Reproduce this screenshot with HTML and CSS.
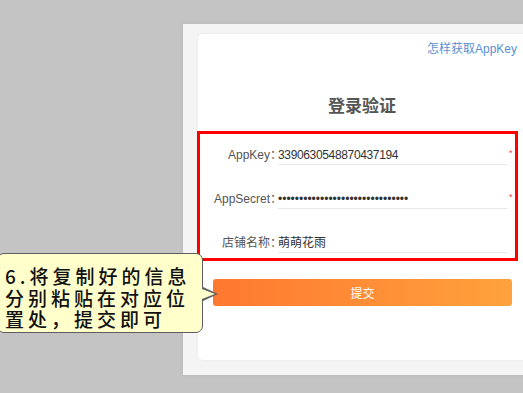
FILE: index.html
```html
<!DOCTYPE html>
<html lang="zh-CN">
<head>
    <meta charset="UTF-8" />
    <meta name="viewport" content="width=device-width, initial-scale=1" />
    <title>登录验证</title>
    <link rel="stylesheet" href="styles.css">
</head>
<body>

<div class="page">
    <div class="panel">
        <div class="card">
            <div class="help"><a href="#">怎样获取AppKey</a></div>
            <h1 class="title">登录验证</h1>

            <div class="fields">
                <div class="row">
                    <label class="label">AppKey：</label>
                    <div class="field digits">3390630548870437194</div>
                    <span class="req">*</span>
                </div>
                <div class="row">
                    <label class="label">AppSecret：</label>
                    <div class="field secret">•••••••••••••••••••••••••••••••</div>
                    <span class="req">*</span>
                </div>
                <div class="row">
                    <label class="label">店铺名称：</label>
                    <div class="field">萌萌花雨</div>
                </div>
            </div>

            <button class="submit">提交</button>
        </div>
    </div>

    <div class="callout">6.将复制好的信息<br>分别粘贴在对应位<br>置处，提交即可</div>
</div>

</body>
</html>
```

FILE: styles.css
```css
* { box-sizing: border-box; }
body {
  margin: 0;
  width: 523px;
  height: 393px;
  overflow: hidden;
  background: #c4c4c4;
  font-family: 'Liberation Sans', 'Noto Sans CJK SC', sans-serif;
  color: #555;
}
.page {
  position: relative;
  width: 523px;
  height: 393px;
  padding-top: 24px;
  overflow: hidden;
}

.panel {
  margin-left: 183px;
  width: 360px;
  height: 351px;
  padding: 10px 0 0 15px;
  background: #f4f4f4;
  box-shadow: 0 0 5px rgba(0,0,0,0.08);
}
.card {
  width: 345px;
  height: 326px;
  background: #fff;
  border-radius: 5px;
  box-shadow: 0 0 3px rgba(0,0,0,0.06);
}

.help {
  width: 325px;
  padding: 7px 6px 0 0;
  text-align: right;
  font-size: 12px;
  line-height: 16px;
}
.help a { color: #5b8fcf; text-decoration: none; }

.title {
  width: 328px;
  margin: 38px 0 12px 0;
  text-align: center;
  font-size: 17px;
  line-height: 24px;
  font-weight: 700;
  color: #555;
}

.fields {
  width: 321px;
  margin-left: -1px;
  border: 3px solid #ff0000;
  padding: 10px 0 4px 0;
  display: flex;
  flex-direction: column;
  gap: 22px;
}
.row {
  display: flex;
  align-items: flex-start;
}
.label {
  width: 82px;
  margin-right: -4px;
  text-align: right;
  font-size: 12px;
  line-height: 22px;
  color: #555;
}
.field {
  width: 229px;
  height: 21px;
  border-bottom: 1px solid #e8e8e8;
  font-size: 12px;
  line-height: 22px;
  color: #333;
}
.field.digits { letter-spacing: -0.35px; }
.req {
  margin: 3px 0 0 2px;
  color: #f04848;
  font-size: 9px;
  line-height: 12px;
}

.submit {
  display: block;
  width: 299px;
  height: 27px;
  margin: 18px 0 0 15px;
  border: none;
  border-radius: 3px;
  background: linear-gradient(90deg, #ff7830, #ffa23c);
  color: #fff;
  font-family: 'Noto Sans CJK SC', sans-serif;
  font-size: 12px;
  padding: 0;
}

.callout {
  position: absolute;
  left: -3px;
  top: 253px;
  width: 206px;
  height: 80px;
  padding: 11px 0 0 7px;
  background: #ffffcc;
  border: 1.5px solid #5e5e5e;
  border-radius: 7px;
  font-family: 'Noto Sans CJK SC', sans-serif;
  font-size: 19px;
  font-weight: 500;
  line-height: 21.5px;
  letter-spacing: 4px;
  color: #111;
  white-space: nowrap;
}
.callout::before,
.callout::after {
  content: '';
  position: absolute;
  top: 33px;
  border-style: solid;
  border-color: transparent;
}
.callout::before {
  right: -16px;
  border-width: 7px 0 7px 15px;
  border-left-color: #5e5e5e;
}
.callout::after {
  right: -13px;
  top: 35px;
  border-width: 5px 0 5px 13px;
  border-left-color: #ffffcc;
}
```
